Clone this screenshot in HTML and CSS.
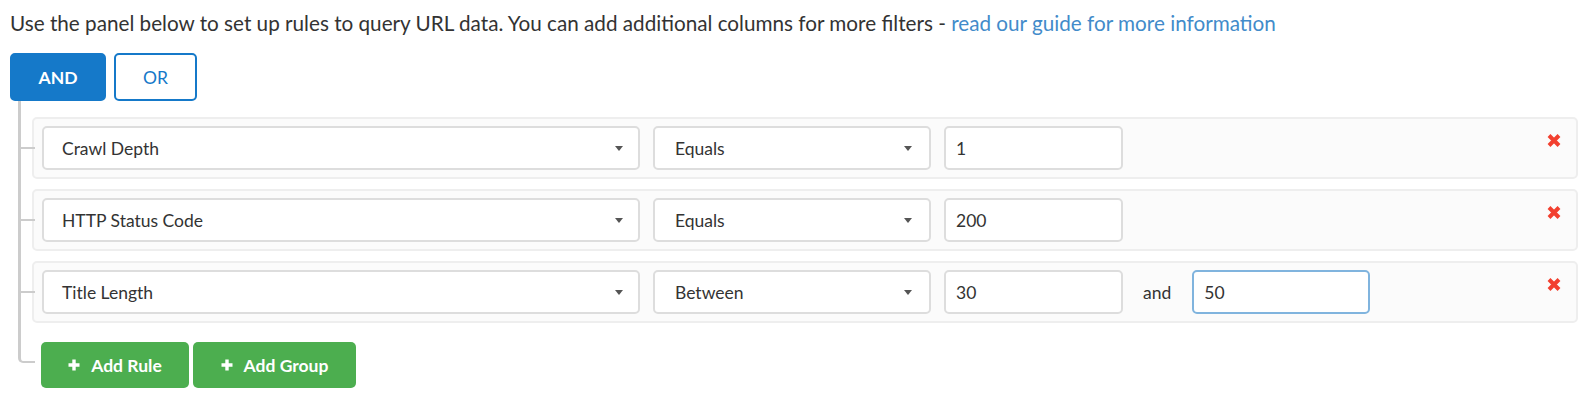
FILE: index.html
```html
<!DOCTYPE html>
<html lang="en">
<head>
<meta charset="utf-8">
<title>Query builder</title>
<link rel="stylesheet" href="styles.css">
</head>
<body>
<div class="builder">
  <p class="intro">Use the panel below to set up rules to query URL data. You can add additional columns for more filters - <a href="#" class="link">read our guide for more information</a></p>
  <div class="group-header">
    <button class="btn btn-and">AND</button>
    <button class="btn btn-or">OR</button>
  </div>
  <div class="group-body">
    <div class="rule">
      <div class="select select-field"><span>Crawl Depth</span><svg class="caret" width="8" height="5" viewBox="0 0 8 5"><polygon points="0,0 8,0 4,5" fill="#555"/></svg></div>
      <div class="select select-op"><span>Equals</span><svg class="caret" width="8" height="5" viewBox="0 0 8 5"><polygon points="0,0 8,0 4,5" fill="#555"/></svg></div>
      <input class="value" type="text" value="1">
      <span class="remove"><svg width="14" height="13" viewBox="0 0 14 13"><path d="M2 1.5 L12 11.5 M12 1.5 L2 11.5" stroke="#f2402f" stroke-width="4" fill="none"/></svg></span>
    </div>
    <div class="rule">
      <div class="select select-field"><span>HTTP Status Code</span><svg class="caret" width="8" height="5" viewBox="0 0 8 5"><polygon points="0,0 8,0 4,5" fill="#555"/></svg></div>
      <div class="select select-op"><span>Equals</span><svg class="caret" width="8" height="5" viewBox="0 0 8 5"><polygon points="0,0 8,0 4,5" fill="#555"/></svg></div>
      <input class="value" type="text" value="200">
      <span class="remove"><svg width="14" height="13" viewBox="0 0 14 13"><path d="M2 1.5 L12 11.5 M12 1.5 L2 11.5" stroke="#f2402f" stroke-width="4" fill="none"/></svg></span>
    </div>
    <div class="rule">
      <div class="select select-field"><span>Title Length</span><svg class="caret" width="8" height="5" viewBox="0 0 8 5"><polygon points="0,0 8,0 4,5" fill="#555"/></svg></div>
      <div class="select select-op"><span>Between</span><svg class="caret" width="8" height="5" viewBox="0 0 8 5"><polygon points="0,0 8,0 4,5" fill="#555"/></svg></div>
      <input class="value" type="text" value="30">
      <span class="sep">and</span>
      <input class="value value-focus" type="text" value="50">
      <span class="remove"><svg width="14" height="13" viewBox="0 0 14 13"><path d="M2 1.5 L12 11.5 M12 1.5 L2 11.5" stroke="#f2402f" stroke-width="4" fill="none"/></svg></span>
    </div>
    <div class="actions">
      <button class="btn btn-add btn-rule"><svg class="plus" width="12" height="12" viewBox="0 0 12 12"><path d="M6 0.5 V11.5 M0.5 6 H11.5" stroke="#fff" stroke-width="3.4" fill="none"/></svg>Add Rule</button>
      <button class="btn btn-add btn-group"><svg class="plus" width="12" height="12" viewBox="0 0 12 12"><path d="M6 0.5 V11.5 M0.5 6 H11.5" stroke="#fff" stroke-width="3.4" fill="none"/></svg>Add Group</button>
    </div>
  </div>
</div>
</body>
</html>
```
FILE: styles.css
```css
* { box-sizing: border-box; }
body {
  margin: 0;
  background: #fff;
  font-family: Lato, "Open Sans", sans-serif;
  font-size: 17.5px;
  color: #333;
}
.builder { padding: 11px 10px 0 10px; }
.intro { margin: 0 0 17px; line-height: 25px; font-size: 20.7px; }
.link { color: #428bca; text-decoration: none; }

.btn {
  font-family: Lato, sans-serif;
  font-size: 17.5px;
  border-radius: 5px;
  cursor: pointer;
  display: inline-flex;
  align-items: center;
  justify-content: center;
}
.group-header { display: flex; gap: 8px; }
.btn-and {
  width: 96px; height: 48px;
  background: #1579c9; color: #fff;
  border: 2px solid #1579c9;
  font-weight: 700;
}
.btn-or {
  width: 83px; height: 48px;
  background: #fff; color: #1579c9;
  border: 2px solid #1579c9;
  font-weight: 400;
}

.group-body { position: relative; padding: 16px 0 0 22px; }

.rule {
  position: relative;
  display: flex;
  align-items: center;
  height: 62px;
  margin-bottom: 10px;
  padding: 7px 10px 7px 8px;
  background: #fbfbfb;
  border: 2px solid #eee;
  border-radius: 5px;
}
.rule::before {
  content: "";
  position: absolute;
  left: -16px; top: -13px;
  width: 14px; height: calc(50% + 12px);
  border-left: 3px solid #ccc;
  border-bottom: 2px solid #ccc;
}
.rule::after {
  content: "";
  position: absolute;
  left: -16px; top: 50%;
  height: calc(50% + 13px);
  border-left: 3px solid #ccc;
}
.rule:first-child::before { top: -18px; height: calc(50% + 17px); }

.select {
  height: 44px;
  display: flex;
  align-items: center;
  justify-content: space-between;
  background: #fff;
  border: 2px solid #ddd;
  border-radius: 5px;
  margin-right: 13px;
  flex: none;
}
.select-field { width: 598px; padding: 0 15px 0 18px; }
.select-op { width: 278px; padding: 0 17px 0 20px; }
.caret { display: block; }

.value {
  width: 179px; height: 44px;
  flex: none;
  border: 2px solid #ddd;
  border-radius: 5px;
  padding: 0 10px;
  font-family: Lato, sans-serif;
  font-size: 17.5px;
  color: #333;
  background: #fff;
  outline: none;
}
.value-focus { width: 178px; border-color: #80b4de; }
.sep { margin: 0 21px 0 20px; }

.remove {
  margin-left: auto;
  margin-right: 5px;
  align-self: flex-start;
  margin-top: 8px;
  display: flex;
}

.actions {
  position: relative;
  display: flex;
  gap: 4px;
  margin-top: 19px;
  padding-left: 9px;
}
.actions::before {
  content: "";
  position: absolute;
  left: -14px; top: -21px;
  width: 14px; height: 40px;
  border-left: 3px solid #ccc;
  border-bottom: 2px solid #ccc;
  border-bottom-left-radius: 5px;
}
.btn-add {
  height: 46px;
  background: #4cae4f;
  border: none;
  color: #fff;
  font-weight: 700;
}
.btn-rule { width: 148px; }
.btn-group { width: 163px; }
.plus { margin-right: 11px; display: block; }
```
